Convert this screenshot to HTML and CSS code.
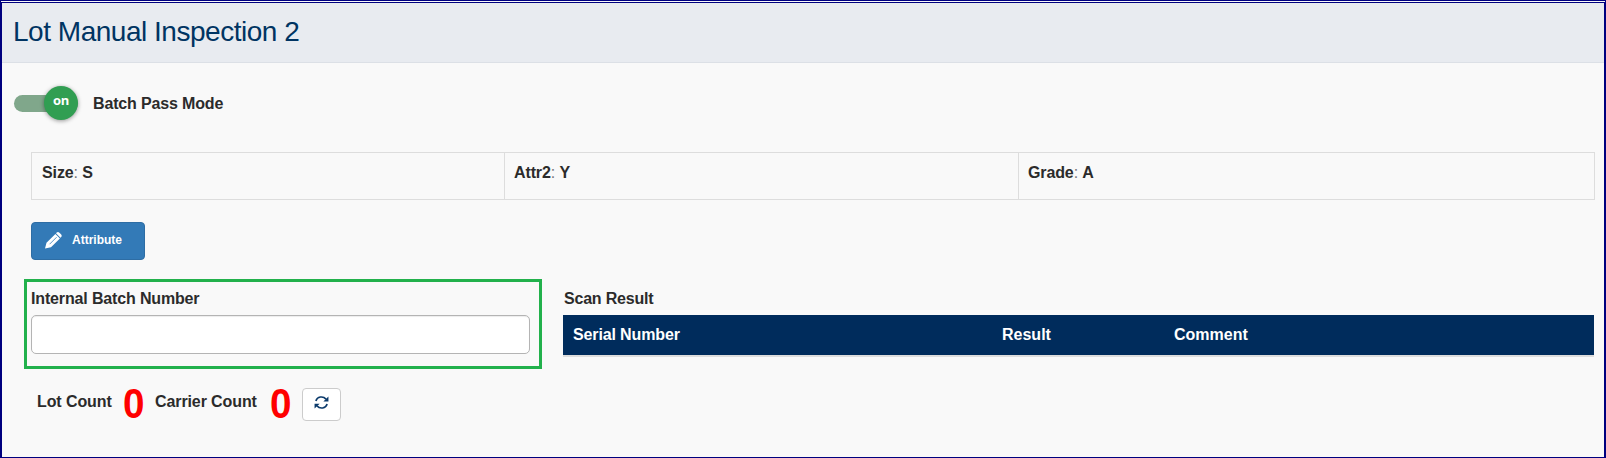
FILE: index.html
```html
<!DOCTYPE html>
<html lang="en">
<head>
<meta charset="utf-8">
<title>Lot Manual Inspection 2</title>
<link rel="stylesheet" href="styles.css">
</head>
<body>
<div class="page">
  <header class="header"><h1 class="title">Lot Manual Inspection 2</h1></header>
  <main class="content">
    <div class="mode">
      <div class="switch"><span class="knob">on</span></div>
      <span class="mode-label">Batch Pass Mode</span>
    </div>
    <div class="attributes">
      <div class="attribute"><b>Size</b><span class="colon">:</span> <b>S</b></div>
      <div class="attribute"><b>Attr2</b><span class="colon">:</span> <b>Y</b></div>
      <div class="attribute"><b>Grade</b><span class="colon">:</span> <b>A</b></div>
    </div>
    <button class="attribute-button">
      <svg class="pencil" viewBox="0 0 17 17" width="17" height="17">
        <path fill="#fff" d="M0 16.5 L1.5 10.8 L10.4 1.9 L14.9 6.4 L6 15.2 Z M11 1.3 L11.7 .6 Q13 -.4 14.4 .7 L16 2.3 Q17.3 3.7 16.2 5.1 L15.5 5.8 Z"/>
        <path stroke="#337ab7" stroke-width=".8" fill="none" d="M4.6 12.2 L11.6 5.2"/>
      </svg>
      <span>Attribute</span>
    </button>
    <div class="columns">
      <section class="batch">
        <label class="label" for="batch">Internal Batch Number</label>
        <input class="input" id="batch" type="text">
      </section>
      <section class="scan">
        <div class="label scan-label">Scan Result</div>
        <div class="table-head">
          <span class="serial">Serial Number</span><span>Result</span><span>Comment</span>
        </div>
      </section>
    </div>
    <div class="counts">
      <span class="count-label lot">Lot Count</span><span class="count">0</span>
      <span class="count-label carrier">Carrier Count</span><span class="count">0</span>
      <button class="refresh" aria-label="Refresh">
        <svg viewBox="0 0 16 16" width="15" height="15">
          <path fill="none" stroke="#0b3a6b" stroke-width="1.7" d="M2 6.4 C3.4 1.6 9.6 .6 12.8 4.4 M14 9.6 C12.6 14.4 6.4 15.4 3.2 11.6"/>
          <path fill="#0b3a6b" d="M15.4 1.6 V6.8 H10 Z M.6 14.4 V9.2 H6 Z"/>
        </svg>
      </button>
    </div>
  </main>
</div>
</body>
</html>
```

FILE: styles.css
```css
* { box-sizing: border-box; }
body {
  margin: 0;
  font: 16px/20px "Liberation Sans", Arial, sans-serif;
  color: #2b2b2b;
}
.page {
  height: 458px;
  overflow: hidden;
  background: #f9f9f9;
  border: 2px solid #00007f;
  border-top: 3px double #00007f;
  border-bottom-width: 1px;
}
.header {
  height: 60px;
  padding: 13px 12px 0 11px;
  background: #e8ebf0;
  border-bottom: 1px solid #dce0e6;
}
.title {
  margin: 0;
  font-size: 28px;
  line-height: 32px;
  font-weight: 400;
  letter-spacing: -.48px;
  color: #003462;
}
.content { padding: 23px 10px 0 12px; }
.mode { display: flex; align-items: center; height: 34px; }
.switch {
  display: flex;
  align-items: center;
  justify-content: flex-end;
  width: 64px;
  height: 17px;
  border-radius: 9px;
  background: #80a78b;
}
.knob {
  width: 34px;
  height: 34px;
  border-radius: 50%;
  background: #319e52;
  box-shadow: 0 1px 4px rgba(0, 0, 0, .4);
  color: #fff;
  font: bold 13px/29px "Open Sans", sans-serif;
  letter-spacing: -.3px;
  text-align: center;
}
.mode-label { margin: 2px 0 0 15px; font-weight: 700; letter-spacing: -.15px; }
.attributes {
  display: grid;
  grid-template-columns: 472px 514px 1fr;
  width: 1564px;
  height: 48px;
  margin: 32px 0 0 17px;
  border: 1px solid #ddd;
  letter-spacing: -.12px;
}
.attribute { padding: 10px 10px 0; }
.attribute + .attribute { padding-left: 9px; border-left: 1px solid #ddd; }
.colon { color: #777; }
.attribute-button {
  display: flex;
  align-items: center;
  gap: 10px;
  width: 114px;
  height: 38px;
  margin: 22px 0 0 17px;
  padding: 0 0 2px 13px;
  border: 1px solid #2e6da4;
  border-radius: 4px;
  background: #337ab7;
  color: #fff;
  font: bold 12px/16px "Liberation Sans", Arial, sans-serif;
}
.columns { display: flex; gap: 21px; margin: 19px 0 0 10px; }
.batch {
  width: 518px;
  height: 90px;
  padding: 7px 9px 0 4px;
  border: 3px solid #22b14c;
}
.label { display: block; height: 26px; font-weight: 700; letter-spacing: -.15px; }
.input {
  display: block;
  width: 499px;
  height: 39px;
  border: 1px solid #b4b4b4;
  border-radius: 5px;
  background: #fff;
  box-shadow: inset 0 1px 1px rgba(0, 0, 0, .075);
}
.scan { width: 1031px; padding-top: 10px; }
.scan-label { padding-left: 1px; letter-spacing: -.2px; }
.table-head {
  display: grid;
  grid-template-columns: 429px 172px 1fr;
  height: 42px;
  padding: 10px 10px 0;
  background: #002c5c;
  border-bottom: 2px solid #ddd;
  color: #fff;
  font-weight: 700;
}
.serial { letter-spacing: -.13px; }
.counts { display: flex; align-items: center; height: 48px; margin: 11px 0 0 23px; }
.count-label { font-weight: 700; margin-bottom: 4px; letter-spacing: -.1px; }
.lot { width: 85px; }
.carrier { width: 114px; margin-left: 10px; }
.count {
  width: 23px;
  color: #f00;
  font-size: 42px;
  font-weight: 700;
  line-height: 48px;
  transform: scaleX(.92);
}
.refresh {
  display: flex;
  align-items: center;
  justify-content: center;
  width: 39px;
  height: 33px;
  margin-left: 10px;
  padding: 0 0 3px;
  border: 1px solid #ccc;
  border-radius: 4px;
  background: #fff;
}
```
